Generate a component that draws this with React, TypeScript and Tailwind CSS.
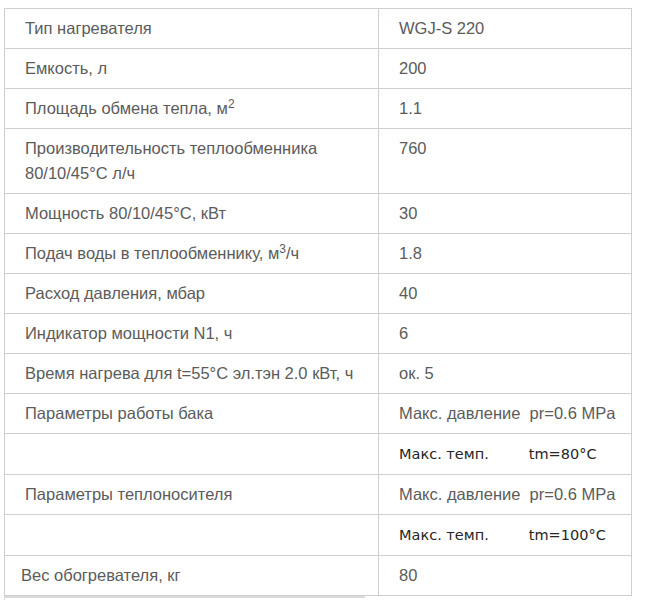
const Sup = ({ children }: { children: React.ReactNode }) => (
  <span className="relative -top-[6px] text-[12px] leading-none">{children}</span>
);

const rows: { label: React.ReactNode; value: React.ReactNode; temp?: string; tight?: boolean }[] = [
  { label: "Тип нагревателя", value: "WGJ-S 220" },
  { label: "Емкость, л", value: "200" },
  {
    label: (
      <>
        Площадь обмена тепла, м<Sup>2</Sup>
      </>
    ),
    value: "1.1",
  },
  {
    label: (
      <>
        Производительность теплообменника
        <br />
        80/10/45°C л/ч
      </>
    ),
    value: "760",
  },
  { label: "Мощность 80/10/45°C, кВт", value: "30" },
  {
    label: (
      <>
        Подач воды в теплообменнику, м<Sup>3</Sup>/ч
      </>
    ),
    value: "1.8",
  },
  { label: "Расход давления, мбар", value: "40" },
  { label: "Индикатор мощности N1, ч", value: "6" },
  { label: "Время нагрева для t=55°C эл.тэн 2.0 кВт, ч", value: "ок. 5" },
  { label: "Параметры работы бака", value: "Макс. давление  pr=0.6 MPa" },
  { label: "", value: "", temp: "tm=80°C" },
  { label: "Параметры теплоносителя", value: "Макс. давление  pr=0.6 MPa" },
  { label: "", value: "", temp: "tm=100°C" },
  { label: "Вес обогревателя, кг", value: "80", tight: true },
];

export default function App() {
  return (
    <div className="w-[646px] h-[600px] bg-white overflow-hidden pt-[8px] pl-[4px]">
      <table
        className="w-[628px] border-collapse text-[16.5px] text-[#5b5b5b]"
        style={{ fontFamily: '"Liberation Sans", Arial, sans-serif' }}
      >
        <tbody>
          {rows.map((r, i) => (
            <tr key={i}>
              <td
                className={`w-[374px] border border-[#cfcfcf] align-top py-[7px] leading-[25px] ${
                  r.tight ? "pl-[16px]" : "pl-[20px]"
                }`}
              >
                {r.label}
              </td>
              <td className="border border-[#cfcfcf] align-top py-[7px] pl-[20px] leading-[25px] whitespace-pre">
                {r.temp ? (
                  <span
                    className="text-[14.5px] text-[#262626]"
                    style={{ fontFamily: '"DejaVu Sans", Verdana, sans-serif' }}
                  >
                    <span>Макс. темп.</span>
                    <span className="ml-[40px]">{r.temp}</span>
                  </span>
                ) : (
                  r.value
                )}
              </td>
            </tr>
          ))}
        </tbody>
      </table>
      <div className="w-[361px] h-[8px] border-l border-t-2 border-[#dadada]" />
    </div>
  );
}
